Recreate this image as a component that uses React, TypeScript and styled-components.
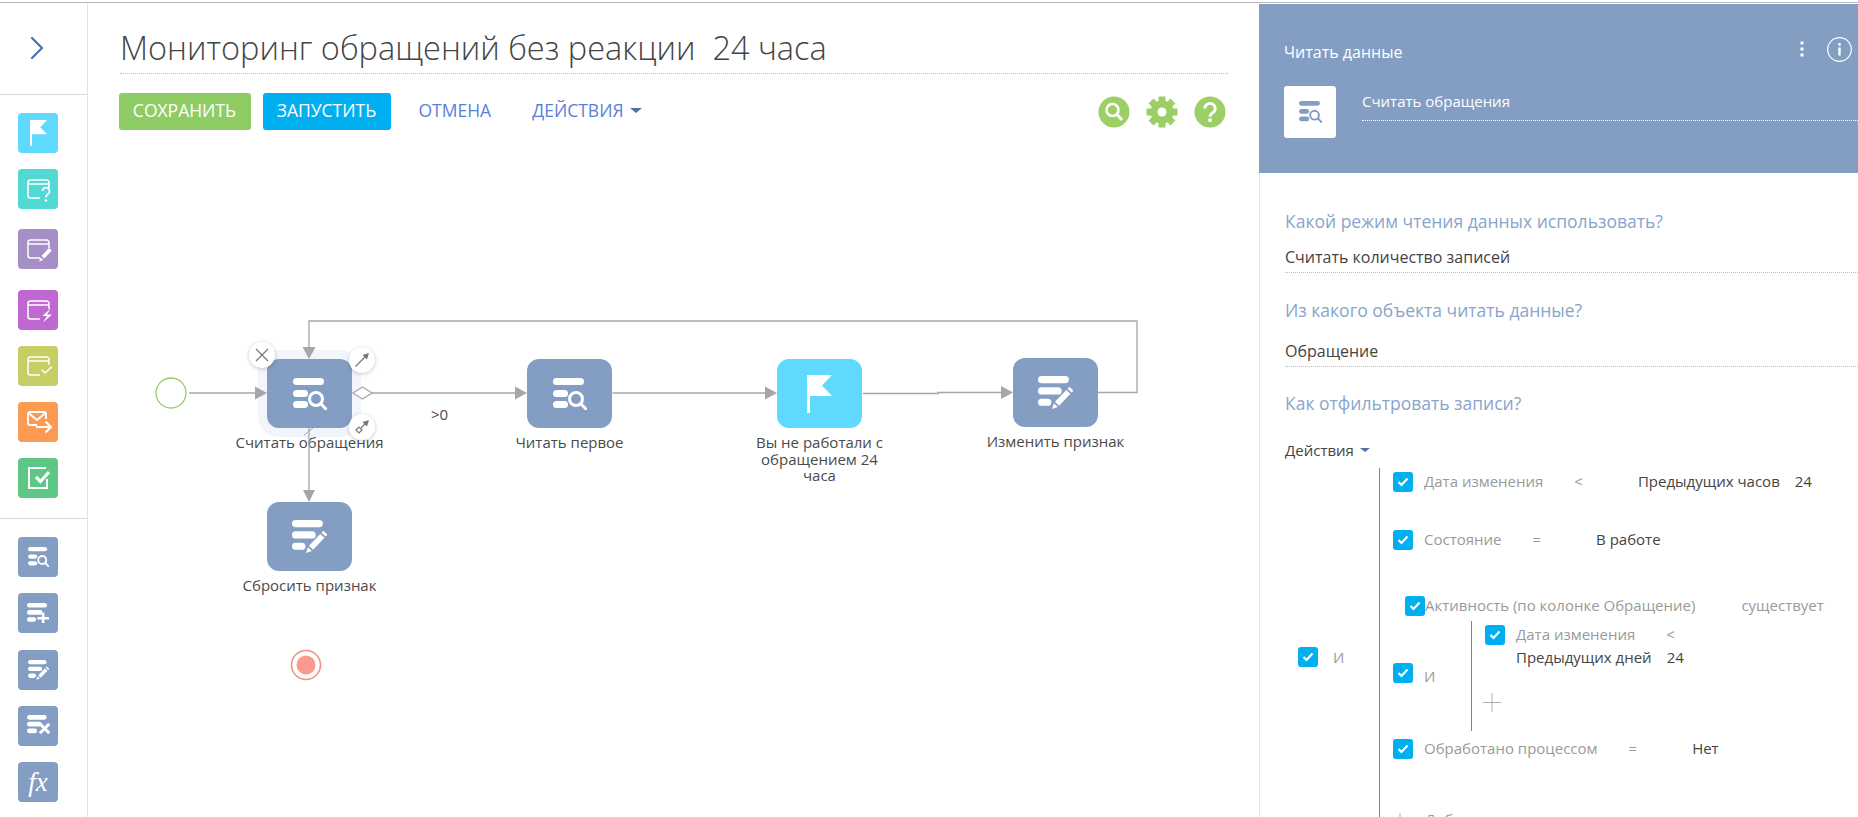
import React from "react";
import styled, { createGlobalStyle } from "styled-components";

const GlobalStyle = createGlobalStyle`
  html, body {
    margin: 0;
    padding: 0;
    background: #fff;
    font-family: "Open Sans", "Liberation Sans", sans-serif;
    color: #444;
  }
  * {
    box-sizing: border-box;
  }
`;

const BLUE = "#849ec3";
const ACCENT = "#00aff0";
const LINE = "#a6a6a6";
const GREEN = "#9ccf65";

type GlyphProps = { size: number; color?: string };

const ReadGlyph = ({ size, color = "#fff" }: GlyphProps) => (
  <svg width={size} height={(size * 32) / 34} viewBox="0 0 34 32" fill={color} stroke="none">
    <rect x="0" y="0" width="31" height="7" rx="3.500" />
    <rect x="0" y="12" width="15" height="7" rx="3.500" />
    <rect x="0" y="23" width="15" height="7" rx="3.500" />
    <circle cx="23" cy="21" r="6.500" fill="none" stroke={color} strokeWidth="3" />
    <path d="M28 26l5.500 5.500" stroke={color} strokeWidth="3" strokeLinecap="round" />
  </svg>
);

const AddGlyph = ({ size }: GlyphProps) => (
  <svg width={size} height={(size * 32) / 34} viewBox="0 0 34 32" fill="#fff">
    <rect x="0" y="0" width="31" height="7" rx="3.500" />
    <rect x="0" y="11" width="24" height="7" rx="3.500" />
    <rect x="0" y="22" width="14" height="7" rx="3.500" />
    <path d="M25 15v17M16 23.500h18" stroke="#fff" strokeWidth="4" />
  </svg>
);

const EditGlyph = ({ size }: GlyphProps) => (
  <svg width={size} height={(size * 32) / 34} viewBox="0 0 34 32" fill="#fff">
    <rect x="0" y="0" width="30" height="7" rx="3.500" />
    <rect x="0" y="11" width="23" height="7" rx="3.500" />
    <rect x="0" y="22" width="13" height="7" rx="3.500" />
    <path d="M30.500 10.500l4 3.800-1.800 1.800-4-3.800zM27.500 13.500l4 3.800-11 11.500-4-3.800zM15.500 26.500l3.800 3.500-5.800 2z" />
  </svg>
);

const DeleteGlyph = ({ size }: GlyphProps) => (
  <svg width={size} height={(size * 32) / 34} viewBox="0 0 34 32" fill="#fff">
    <rect x="0" y="0" width="29" height="7" rx="3.500" />
    <rect x="0" y="10" width="22" height="7" rx="3.500" />
    <rect x="0" y="20" width="15" height="7" rx="3.500" />
    <path d="M19 13l14 14M33 13L19 27" stroke="#fff" strokeWidth="4.500" />
  </svg>
);

const FlagGlyph = ({ size }: GlyphProps) => (
  <svg width={size} height={(size * 38) / 25} viewBox="0 0 25 38" fill="#fff">
    <path d="M0 0H25L15 10.500L25 21H3V38H0Z" />
  </svg>
);

const WindowFrame = () => (
  <path
    d="M22 29H12.500a2.500 2.500 0 0 1-2.500-2.500V13.500a2.500 2.500 0 0 1 2.500-2.500H28.500a2.500 2.500 0 0 1 2.500 2.500V19M10 15H31"
    fill="none"
    stroke="#fff"
    strokeWidth="1.500"
  />
);

const QuestionGlyph = () => (
  <svg width="40" height="40" viewBox="0 0 40 40" fill="none">
    <WindowFrame />
    <path d="M24.500 22a3.500 3.500 0 1 1 5.500 3c-1.500 1-2 1.700-2 3.500" stroke="#fff" strokeWidth="1.700" />
    <circle cx="28" cy="31.500" r="1.200" fill="#fff" />
  </svg>
);

const WindowEditGlyph = () => (
  <svg width="40" height="40" viewBox="0 0 40 40" fill="none">
    <WindowFrame />
    <path d="M31 19l2.800 2.500-7.500 8-2.800-2.500zM22.500 28.500l2.800 2.500-4.300 1.500z" fill="#fff" />
  </svg>
);

const WindowBoltGlyph = () => (
  <svg width="40" height="40" viewBox="0 0 40 40" fill="none">
    <WindowFrame />
    <path d="M32.500 18.500L24.500 26h4.500l-4 6.500 9-8h-5z" fill="#fff" />
  </svg>
);

const WindowCheckGlyph = () => (
  <svg width="40" height="40" viewBox="0 0 40 40" fill="none">
    <WindowFrame />
    <path d="M23.500 23.500l3.500 3.500 7-6.500" stroke="#fff" strokeWidth="1.500" />
  </svg>
);

const MailGlyph = () => (
  <svg width="40" height="40" viewBox="0 0 40 40" fill="none" stroke="#fff" strokeWidth="1.800">
    <path d="M19 23H12a2 2 0 0 1-2-2V12a2 2 0 0 1 2-2H26a2 2 0 0 1 2 2V17" />
    <path d="M10.500 11L19 18l8.500-7" />
    <path d="M18 25H33M27.500 19.500L33 25l-5.500 5.500" strokeWidth="2" />
  </svg>
);

const TaskGlyph = () => (
  <svg width="40" height="40" viewBox="0 0 40 40" fill="none" stroke="#fff">
    <path d="M28 10H11V30H29V21" strokeWidth="2" />
    <path d="M18 19l4.500 4.500L31 14" strokeWidth="3.200" />
  </svg>
);

const Page = styled.div`
  height: 817px;
  width: 1858px;
  overflow: hidden;
  display: flex;
  flex-direction: column;
  padding-top: 2px;
`;

const TopRule = styled.div`
  height: 2px;
  flex: none;
  border-top: 1px solid #b8b8b8;
`;

const Body = styled.div`
  flex: 1;
  display: flex;
  min-height: 0;
`;

const Sidebar = styled.aside`
  width: 88px;
  flex: none;
  border-right: 1px solid #e3e3e3;
  display: flex;
  flex-direction: column;
`;

const SidebarTop = styled.div`
  height: 91px;
  flex: none;
  border-bottom: 1px solid #d8d8d8;
  display: flex;
  align-items: center;
  padding: 0 0 3px 30px;
`;

const ToolGroup = styled.div<{ $height: number }>`
  height: ${({ $height }) => $height}px;
  flex: none;
  padding: 18px 0 0 18px;
  border-bottom: 1px solid #d8d8d8;
  &:last-child {
    border-bottom: 0;
  }
`;

const Tool = styled.div<{ $bg: string; $mt?: number }>`
  width: 40px;
  height: 40px;
  margin-top: ${({ $mt }) => $mt ?? 0}px;
  border-radius: 4px;
  background: ${({ $bg }) => $bg};
  display: flex;
  align-items: center;
  justify-content: center;
`;

const FxText = styled.span`
  font-family: "Liberation Serif", serif;
  font-style: italic;
  font-size: 27px;
  line-height: 1;
  color: #fff;
`;

const Main = styled.main`
  flex: 1;
  min-width: 0;
  display: flex;
  flex-direction: column;
`;

const Header = styled.header`
  height: 146px;
  flex: none;
  padding: 26px 31px 0 32px;
`;

const Title = styled.h1`
  margin: 0;
  height: 44px;
  border-bottom: 1px dotted #bdbdbd;
  font-size: 32.500px;
  line-height: 36px;
  font-weight: 300;
  color: #444;
  white-space: pre;
`;

const Toolbar = styled.div`
  display: flex;
  align-items: center;
  margin: 19px 2px 0 -1.500px;
`;

const Button = styled.button<{ $bg: string; $width: number }>`
  width: ${({ $width }) => $width}px;
  height: 37px;
  margin-right: 12px;
  padding: 0 0 3px;
  border: 0;
  border-radius: 3px;
  background: ${({ $bg }) => $bg};
  color: #fff;
  font: 400 17.500px "Open Sans", sans-serif;
`;

const LinkButton = styled.span<{ $ml: number }>`
  margin: 0 0 3px ${({ $ml }) => $ml}px;
  color: #5a7fd8;
  font-size: 17.500px;
  display: inline-flex;
  align-items: center;
`;

const Caret = styled.span<{ $size?: number }>`
  display: inline-block;
  margin-left: 6px;
  border-style: solid;
  border-width: ${({ $size = 5 }) => `${$size}px ${$size + 1}px 0`};
  border-color: #53709f transparent transparent;
`;

const ToolbarIcons = styled.div`
  margin-left: auto;
  display: flex;
  align-items: center;
  gap: 16px;
`;

const Canvas = styled.div`
  position: relative;
  flex: 1;
  min-height: 0;
`;

const Wires = styled.svg`
  position: absolute;
  left: 0;
  top: 0;
  width: 100%;
  height: 100%;
  pointer-events: none;
`;

const NodeWrap = styled.div<{ $x: number; $y: number }>`
  position: absolute;
  left: ${({ $x }) => $x - 50}px;
  top: ${({ $y }) => $y}px;
  width: 185px;
  display: flex;
  flex-direction: column;
  align-items: center;
`;

const Tile = styled.div<{ $bg: string; $selected?: boolean }>`
  width: 85px;
  height: 69px;
  border-radius: 12px;
  background: ${({ $bg }) => $bg};
  box-shadow: ${({ $selected }) => ($selected ? "0 0 0 9px #f2f5fc" : "none")};
  display: flex;
  align-items: center;
  justify-content: center;
`;

const NodeLabel = styled.div`
  margin-top: 6px;
  font-size: 15px;
  line-height: 16.500px;
  text-align: center;
  white-space: nowrap;
  color: #4a4a4a;
`;

const EdgeLabel = styled.span`
  position: absolute;
  left: 343px;
  top: 255px;
  font-size: 15px;
  line-height: 18px;
  color: #4a4a4a;
`;

const NodeAction = styled.div<{ $x: number; $y: number }>`
  position: absolute;
  left: ${({ $x }) => $x - 13}px;
  top: ${({ $y }) => $y - 13}px;
  width: 26px;
  height: 26px;
  border-radius: 50%;
  background: #fff;
  box-shadow: 0 1px 4px rgba(0, 0, 0, 0.22);
  display: flex;
  align-items: center;
  justify-content: center;
`;

const Panel = styled.section`
  width: 599px;
  flex: none;
  border-left: 1px solid #e6e6e6;
  display: flex;
  flex-direction: column;
`;

const PanelHead = styled.div`
  height: 169px;
  flex: none;
  margin-left: -1px;
  background: ${BLUE};
  padding: 38px 0 0 25px;
  color: #fff;
`;

const HeadTop = styled.div`
  display: flex;
  align-items: center;
  height: 20px;
  font-size: 16px;
`;

const HeadTools = styled.div`
  margin-left: auto;
  margin-right: 6px;
  display: flex;
  align-items: center;
  gap: 23px;
  margin-top: -6px;
`;

const HeadRow = styled.div`
  display: flex;
  margin-top: 24px;
  gap: 26px;
`;

const IconBox = styled.div`
  width: 52px;
  height: 52px;
  flex: none;
  background: #fff;
  border-radius: 3px;
  display: flex;
  align-items: center;
  justify-content: center;
`;

const NameField = styled.div`
  flex: 1;
  height: 35px;
  border-bottom: 1px dotted #fff;
  font-size: 15px;
  line-height: 31px;
`;

const PanelBody = styled.div`
  flex: 1;
  padding: 37px 0 0 25px;
  min-height: 0;
`;

const Question = styled.div<{ $mt?: number }>`
  margin-top: ${({ $mt }) => $mt ?? 0}px;
  font-size: 17.500px;
  line-height: 22px;
  color: #88a5cc;
`;

const Value = styled.div<{ $mt: number }>`
  margin-top: ${({ $mt }) => $mt}px;
  padding-bottom: 3px;
  border-bottom: 1px dotted #bdbdbd;
  font-size: 16px;
  line-height: 24px;
  color: #444;
`;

const Actions = styled.div`
  margin-top: 26px;
  height: 20px;
  font-size: 15px;
  line-height: 20px;
  color: #444;
  display: flex;
  align-items: center;
`;

const Group = styled.div`
  display: flex;
  font-size: 15px;
  line-height: 18px;
`;

const GroupHead = styled.div<{ $width: number; $gap: number }>`
  width: ${({ $width }) => $width}px;
  flex: none;
  display: flex;
  align-items: center;
  gap: ${({ $gap }) => $gap}px;
`;

const RootGroup = styled(Group)`
  margin: 8px 0 0 13px;
  height: 378px;
`;

const GroupBody = styled.div`
  border-left: 1px solid ${ACCENT};
  padding: 4px 0 0 13px;
  flex: 1;
`;

const Row = styled.div<{ $mt?: number; $ml?: number }>`
  display: flex;
  align-items: center;
  margin-top: ${({ $mt }) => $mt ?? 0}px;
  margin-left: ${({ $ml }) => $ml ?? 0}px;
  white-space: nowrap;
`;

const Box = styled.span`
  width: 20px;
  height: 20px;
  flex: none;
  border-radius: 3px;
  background: ${ACCENT};
  display: inline-flex;
  align-items: center;
  justify-content: center;
`;

const Field = styled.span<{ $ml?: number }>`
  margin: 0 0 2px ${({ $ml }) => $ml ?? 11}px;
  color: #9a9a9a;
`;

const Operator = styled.span<{ $ml?: number }>`
  margin: 0 0 2px ${({ $ml }) => $ml ?? 31}px;
  color: #9a9a9a;
`;

const FilterValue = styled.span<{ $ml?: number }>`
  margin: 0 0 2px ${({ $ml }) => $ml ?? 55}px;
  color: #444;
`;

const Muted = styled.span`
  color: #9a9a9a;
`;

const SubGroup = styled(Group)`
  margin-top: 5px;
`;

const SubHead = styled(GroupHead)`
  align-items: flex-start;
  padding-top: 42px;
`;

const SubLetter = styled(Muted)`
  margin-top: 4px;
`;

const SubBody = styled.div`
  border-left: 1px solid ${ACCENT};
  height: 110px;
  padding: 4px 0 0 13px;
`;

const SubValueRow = styled.div`
  margin: 3px 0 0 31px;
  white-space: nowrap;
`;

const PlusIcon = styled.svg`
  display: block;
  flex: none;
`;

const SubPlus = styled.div`
  margin: 27px 0 0 -2px;
`;

const AddRow = styled(Row)`
  margin: 49px 0 0 -2px;
`;

const AddPlus = styled.div`
  margin-top: 5px;
`;

const Check = () => (
  <Box>
    <svg width="12" height="10" viewBox="0 0 12 10" fill="none">
      <path d="M1.500 5l3 3 6-6.500" stroke="#fff" strokeWidth="2.200" />
    </svg>
  </Box>
);

const Plus = () => (
  <PlusIcon width="18" height="19" viewBox="0 0 18 19" fill="none">
    <path d="M9 0v19M0 9.500h18" stroke="#b0b0b0" strokeWidth="1" />
  </PlusIcon>
);

const SearchBadge = () => (
  <svg width="32" height="32" viewBox="0 0 32 32">
    <circle cx="16" cy="16" r="15.500" fill={GREEN} />
    <circle cx="14.500" cy="14" r="6" fill="none" stroke="#fff" strokeWidth="2.500" />
    <path d="M19 18.500l5 5.500" stroke="#fff" strokeWidth="2.800" />
  </svg>
);

const GearBadge = () => (
  <svg width="32" height="32" viewBox="0 0 32 32">
    {[0, 45, 90, 135].map((a) => (
      <rect key={a} x="12.500" y="0.500" width="7" height="31" fill={GREEN} transform={`rotate(${a} 16 16)`} />
    ))}
    <circle cx="16" cy="16" r="11.500" fill={GREEN} />
    <circle cx="16" cy="16" r="4.500" fill="#fff" />
  </svg>
);

const HelpBadge = () => (
  <svg width="32" height="32" viewBox="0 0 32 32">
    <circle cx="16" cy="16" r="15.500" fill={GREEN} />
    <path d="M10.800 12.500a5.200 5 0 1 1 8 4.200c-2 1.300-2.800 2-2.800 4" fill="none" stroke="#fff" strokeWidth="2.800" />
    <rect x="14.300" y="22.500" width="3.400" height="3.400" fill="#fff" />
  </svg>
);

const Arrow = ({ points }: { points: string }) => <polygon points={points} fill={LINE} />;

const wirePaths = [
  "M101 243H168",
  "M284 243H428",
  "M524.500 243H678",
  "M775 243.500H850V242.500H914",
  "M1010 242.500H1049V171H221V198",
  "M221 278V341",
];

const App = () => (
  <>
    <GlobalStyle />
    <Page>
      <TopRule />
      <Body>
        <Sidebar>
          <SidebarTop>
            <svg width="14" height="24" viewBox="0 0 14 24" fill="none">
              <path d="M2 2l10 10L2 22" stroke="#4a6fb5" strokeWidth="2.200" strokeLinecap="round" strokeLinejoin="round" />
            </svg>
          </SidebarTop>
          <ToolGroup $height={424}>
            <Tool $bg="#60d9ff">
              <FlagGlyph size={17} />
            </Tool>
            <Tool $bg="#52d9d3" $mt={16}>
              <QuestionGlyph />
            </Tool>
            <Tool $bg="#a68fc6" $mt={20}>
              <WindowEditGlyph />
            </Tool>
            <Tool $bg="#c068d2" $mt={21}>
              <WindowBoltGlyph />
            </Tool>
            <Tool $bg="#c7cd65" $mt={16}>
              <WindowCheckGlyph />
            </Tool>
            <Tool $bg="#fb9a53" $mt={16}>
              <MailGlyph />
            </Tool>
            <Tool $bg="#5fc785" $mt={16}>
              <TaskGlyph />
            </Tool>
          </ToolGroup>
          <ToolGroup $height={298}>
            <Tool $bg={BLUE}>
              <ReadGlyph size={21} />
            </Tool>
            <Tool $bg={BLUE} $mt={16}>
              <AddGlyph size={22} />
            </Tool>
            <Tool $bg={BLUE} $mt={17}>
              <EditGlyph size={21} />
            </Tool>
            <Tool $bg={BLUE} $mt={16}>
              <DeleteGlyph size={23} />
            </Tool>
            <Tool $bg={BLUE} $mt={16}>
              <FxText>fx</FxText>
            </Tool>
          </ToolGroup>
        </Sidebar>

        <Main>
          <Header>
            <Title>Мониторинг обращений без реакции  24 часа</Title>
            <Toolbar>
              <Button $bg="#8fcc63" $width={132}>
                СОХРАНИТЬ
              </Button>
              <Button $bg={ACCENT} $width={128}>
                ЗАПУСТИТЬ
              </Button>
              <LinkButton $ml={16}>ОТМЕНА</LinkButton>
              <LinkButton $ml={41}>
                ДЕЙСТВИЯ
                <Caret />
              </LinkButton>
              <ToolbarIcons>
                <SearchBadge />
                <GearBadge />
                <HelpBadge />
              </ToolbarIcons>
            </Toolbar>
          </Header>

          <Canvas>
            <NodeWrap $x={179} $y={209}>
              <Tile $bg={BLUE} $selected>
                <ReadGlyph size={34} />
              </Tile>
              <NodeLabel>Считать обращения</NodeLabel>
            </NodeWrap>
            <EdgeLabel>&gt;0</EdgeLabel>
            <NodeWrap $x={439} $y={209}>
              <Tile $bg={BLUE}>
                <ReadGlyph size={34} />
              </Tile>
              <NodeLabel>Читать первое</NodeLabel>
            </NodeWrap>
            <NodeWrap $x={689} $y={209}>
              <Tile $bg="#60d9ff">
                <FlagGlyph size={25} />
              </Tile>
              <NodeLabel>
                Вы не работали с
                <br />
                обращением 24
                <br />
                часа
              </NodeLabel>
            </NodeWrap>
            <NodeWrap $x={925} $y={208}>
              <Tile $bg={BLUE}>
                <EditGlyph size={35} />
              </Tile>
              <NodeLabel>Изменить признак</NodeLabel>
            </NodeWrap>
            <NodeWrap $x={179} $y={352}>
              <Tile $bg={BLUE}>
                <EditGlyph size={35} />
              </Tile>
              <NodeLabel>Сбросить признак</NodeLabel>
            </NodeWrap>

            <Wires fill="none">
              {wirePaths.map((d) => (
                <path key={d} d={d} stroke={LINE} strokeWidth="1.300" />
              ))}
              <circle cx="83" cy="243" r="15" stroke="#93cd62" strokeWidth="1.300" />
              <Arrow points="167,236.500 179,243 167,249.500" />
              <Arrow points="427,236.500 439,243 427,249.500" />
              <Arrow points="677,236.500 689,243 677,249.500" />
              <Arrow points="913,236 925,242.500 913,249" />
              <Arrow points="214.500,197 227.500,197 221,209" />
              <Arrow points="215,340 227,340 221,352" />
              <path d="M265 243l9.500-6 9.500 6-9.500 6z" fill="#fff" stroke={LINE} strokeWidth="1.200" />
              <path d="M216 285l9-7" stroke={LINE} strokeWidth="1" />
              <circle cx="218" cy="515" r="14.500" stroke="#f08f85" strokeWidth="1.500" />
              <circle cx="218" cy="515" r="9.500" fill="#fb9a8d" />
            </Wires>

            <NodeAction $x={174} $y={205}>
              <svg width="14" height="14" viewBox="0 0 14 14" fill="none">
                <path d="M1 1l12 12M13 1L1 13" stroke="#777" strokeWidth="1.200" />
              </svg>
            </NodeAction>
            <NodeAction $x={274} $y={210}>
              <svg width="16" height="16" viewBox="0 0 16 16" fill="none">
                <path d="M1.500 14.500L12 4" stroke="#777" strokeWidth="1.200" />
                <path d="M15 1l-2 6.500-4.500-4.500z" fill="#777" />
              </svg>
            </NodeAction>
            <NodeAction $x={274} $y={277}>
              <svg width="16" height="16" viewBox="0 0 16 16" fill="none">
                <path d="M2 11l3-3 3 3-3 3z" stroke="#777" strokeWidth="1.200" />
                <path d="M7 9l5-5" stroke="#777" strokeWidth="1.200" />
                <path d="M15 1l-2 6.500-4.500-4.500z" fill="#777" />
              </svg>
            </NodeAction>
          </Canvas>
        </Main>

        <Panel>
          <PanelHead>
            <HeadTop>
              Читать данные
              <HeadTools>
                <svg width="4" height="16" viewBox="0 0 4 16" fill="#fff">
                  <rect x="0.500" y="0.500" width="3" height="3" />
                  <rect x="0.500" y="6.500" width="3" height="3" />
                  <rect x="0.500" y="12.500" width="3" height="3" />
                </svg>
                <svg width="25" height="25" viewBox="0 0 25 25" fill="none">
                  <circle cx="12.500" cy="12.500" r="11.800" stroke="#fff" strokeWidth="1.200" />
                  <rect x="11.300" y="10.500" width="2.400" height="8" fill="#fff" />
                  <rect x="11.300" y="6" width="2.400" height="2.600" fill="#fff" />
                </svg>
              </HeadTools>
            </HeadTop>
            <HeadRow>
              <IconBox>
                <ReadGlyph size={23} color={BLUE} />
              </IconBox>
              <NameField>Считать обращения</NameField>
            </HeadRow>
          </PanelHead>

          <PanelBody>
            <Question>Какой режим чтения данных использовать?</Question>
            <Value $mt={13}>Считать количество записей</Value>
            <Question $mt={26}>Из какого объекта читать данные?</Question>
            <Value $mt={18}>Обращение</Value>
            <Question $mt={25}>Как отфильтровать записи?</Question>
            <Actions>
              Действия
              <Caret $size={4} />
            </Actions>

            <RootGroup>
              <GroupHead $width={81} $gap={15}>
                <Check />
                <Muted>И</Muted>
              </GroupHead>
              <GroupBody>
                <Row>
                  <Check />
                  <Field>Дата изменения</Field>
                  <Operator>&lt;</Operator>
                  <FilterValue>Предыдущих часов</FilterValue>
                  <FilterValue $ml={15}>24</FilterValue>
                </Row>
                <Row $mt={38}>
                  <Check />
                  <Field>Состояние</Field>
                  <Operator>=</Operator>
                  <FilterValue>В работе</FilterValue>
                </Row>
                <Row $mt={46} $ml={12}>
                  <Check />
                  <Field $ml={0}>Активность (по колонке Обращение)</Field>
                  <Operator $ml={46}>существует</Operator>
                </Row>
                <SubGroup>
                  <SubHead $width={78} $gap={11}>
                    <Check />
                    <SubLetter>И</SubLetter>
                  </SubHead>
                  <SubBody>
                    <Row>
                      <Check />
                      <Field>Дата изменения</Field>
                      <Operator>&lt;</Operator>
                    </Row>
                    <SubValueRow>
                      <FilterValue $ml={0}>Предыдущих дней</FilterValue>
                      <FilterValue $ml={15}>24</FilterValue>
                    </SubValueRow>
                    <SubPlus>
                      <Plus />
                    </SubPlus>
                  </SubBody>
                </SubGroup>
                <Row $mt={8}>
                  <Check />
                  <Field>Обработано процессом</Field>
                  <Operator>=</Operator>
                  <FilterValue>Нет</FilterValue>
                </Row>
                <AddRow>
                  <AddPlus>
                    <Plus />
                  </AddPlus>
                  <Field $ml={16}>Добавить</Field>
                </AddRow>
              </GroupBody>
            </RootGroup>
          </PanelBody>
        </Panel>
      </Body>
    </Page>
  </>
);

export default App;
